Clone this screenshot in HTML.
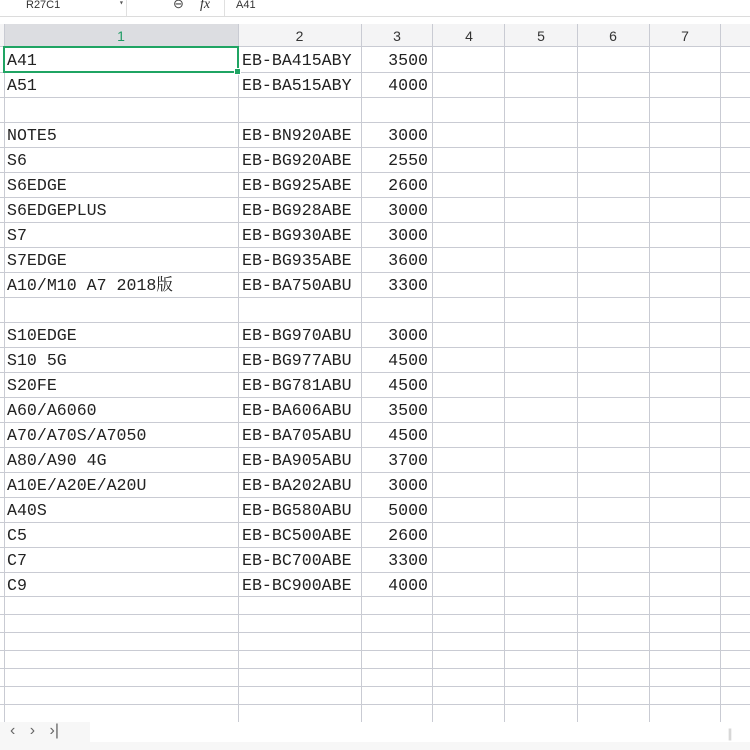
<!DOCTYPE html>
<html><head><meta charset="utf-8"><style>
body{margin:0;width:750px;height:750px;overflow:hidden;background:#fff;position:relative;font-family:"Liberation Mono","Noto Serif CJK SC",monospace;}
.a{position:absolute}
.vl{position:absolute;top:24px;width:1px;height:698px;background:#c9cbd3}
.hl{position:absolute;left:0;width:750px;height:1px;background:#c9cbd3}
.t{position:absolute;font-size:16.6px;color:#222;line-height:25px;white-space:pre}
.h{position:absolute;top:24px;height:22px;line-height:24px;font-family:"Liberation Sans",sans-serif;font-size:14px;color:#333;text-align:center}
</style></head><body>
<div class="a" style="left:0;top:0;width:750px;height:16px;background:#fff;border-bottom:1px solid #dcdcdc"></div>
<div class="a" style="left:0;top:0;width:126px;height:16px;border-right:1px solid #e0e0e0"></div>
<div class="a" style="left:26px;top:-1px;font-family:'Liberation Sans',sans-serif;font-size:11px;color:#333">R27C1</div>
<div class="a" style="left:119px;top:-2px;font-size:8px;color:#555">▾</div>
<div class="a" style="left:173px;top:-4px;font-family:'Liberation Sans',sans-serif;font-size:13px;color:#444">⊖</div>
<div class="a" style="left:200px;top:-3px;font-family:'Liberation Serif',serif;font-style:italic;font-size:14px;color:#333">fx</div>
<div class="a" style="left:224px;top:0;width:1px;height:16px;background:#e0e0e0"></div>
<div class="a" style="left:236px;top:-1px;font-family:'Liberation Sans',sans-serif;font-size:11px;color:#333">A41</div>
<div class="a" style="left:0;top:24px;width:750px;height:22px;background:#f4f4f5;border-bottom:1px solid #c9cbd3"></div>
<div class="a" style="left:4px;top:24px;width:234px;height:22px;background:#dcdde1"></div>
<div class="h" style="left:4px;width:234px;color:#1e9a63">1</div>
<div class="h" style="left:238px;width:123px">2</div>
<div class="h" style="left:361px;width:72px">3</div>
<div class="h" style="left:433px;width:72px">4</div>
<div class="h" style="left:505px;width:72px">5</div>
<div class="h" style="left:577px;width:72px">6</div>
<div class="h" style="left:649px;width:72px">7</div>
<div class="vl" style="left:4px"></div><div class="vl" style="left:238px"></div><div class="vl" style="left:361px"></div><div class="vl" style="left:432px"></div><div class="vl" style="left:504px"></div><div class="vl" style="left:577px"></div><div class="vl" style="left:649px"></div><div class="vl" style="left:720px"></div>
<div class="hl" style="top:72px"></div><div class="hl" style="top:97px"></div><div class="hl" style="top:122px"></div><div class="hl" style="top:147px"></div><div class="hl" style="top:172px"></div><div class="hl" style="top:197px"></div><div class="hl" style="top:222px"></div><div class="hl" style="top:247px"></div><div class="hl" style="top:272px"></div><div class="hl" style="top:297px"></div><div class="hl" style="top:322px"></div><div class="hl" style="top:347px"></div><div class="hl" style="top:372px"></div><div class="hl" style="top:397px"></div><div class="hl" style="top:422px"></div><div class="hl" style="top:447px"></div><div class="hl" style="top:472px"></div><div class="hl" style="top:497px"></div><div class="hl" style="top:522px"></div><div class="hl" style="top:547px"></div><div class="hl" style="top:572px"></div><div class="hl" style="top:596px"></div><div class="hl" style="top:614px"></div><div class="hl" style="top:632px"></div><div class="hl" style="top:650px"></div><div class="hl" style="top:668px"></div><div class="hl" style="top:686px"></div><div class="hl" style="top:704px"></div>
<div class="a" style="left:3px;top:46px;width:232px;height:23px;border:2px solid #1fa463"></div>
<div class="a" style="left:234px;top:68px;width:5px;height:5px;background:#1fa463;border:1px solid #fff"></div>
<div class="t" style="left:7px;top:48px">A41
A51

NOTE5
S6
S6EDGE
S6EDGEPLUS
S7
S7EDGE
A10/M10 A7 2018版

S10EDGE
S10 5G
S20FE
A60/A6060
A70/A70S/A7050
A80/A90 4G
A10E/A20E/A20U
A40S
C5
C7
C9</div>
<div class="t" style="left:242px;top:48px">EB-BA415ABY
EB-BA515ABY

EB-BN920ABE
EB-BG920ABE
EB-BG925ABE
EB-BG928ABE
EB-BG930ABE
EB-BG935ABE
EB-BA750ABU

EB-BG970ABU
EB-BG977ABU
EB-BG781ABU
EB-BA606ABU
EB-BA705ABU
EB-BA905ABU
EB-BA202ABU
EB-BG580ABU
EB-BC500ABE
EB-BC700ABE
EB-BC900ABE</div>
<div class="t" style="left:361px;width:67px;top:48px;text-align:right">3500
4000

3000
2550
2600
3000
3000
3600
3300

3000
4500
4500
3500
4500
3700
3000
5000
2600
3300
4000</div>
<div class="a" style="left:0;top:722px;width:750px;height:28px;background:#f7f7f7"></div>
<div class="a" style="left:90px;top:722px;width:660px;height:20px;background:#fff"></div>
<div class="a" style="left:10px;top:722px;font-family:'Liberation Sans',sans-serif;font-size:16px;color:#666;word-spacing:10px">‹ › ›|</div>
<div class="a" style="left:724px;top:726px;font-size:12px;color:#888">‖</div>
</body></html>
